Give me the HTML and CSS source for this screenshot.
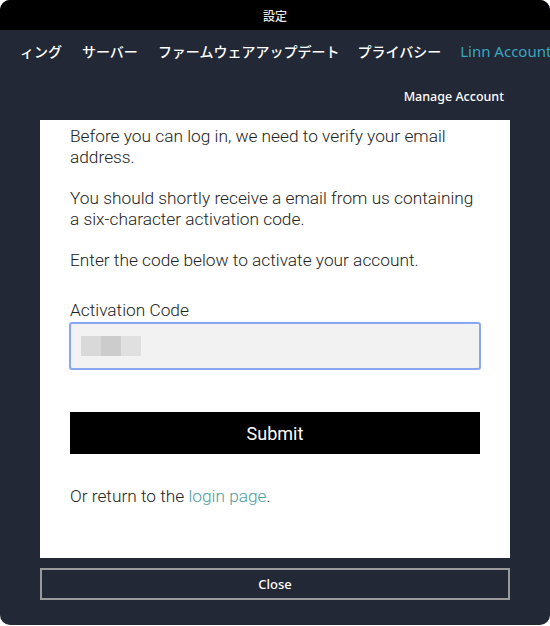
FILE: index.html
```html
<!DOCTYPE html>
<html lang="ja">
<head>
<meta charset="utf-8">
<title>設定</title>
<link rel="stylesheet" href="styles.css">
</head>
<body>
<div class="window">
  <div class="titlebar">設定</div>
  <div class="body">
    <nav class="tabs">
      <span class="tab">ィング</span>
      <span class="tab">サーバー</span>
      <span class="tab">ファームウェアアップデート</span>
      <span class="tab">プライバシー</span>
      <span class="tab active">Linn Account</span>
    </nav>
    <div class="manage">Manage Account</div>
    <div class="card">
      <p>Before you can log in, we need to verify your email address.</p>
      <p>You should shortly receive a email from us containing a six-character activation code.</p>
      <p>Enter the code below to activate your account.</p>
      <label class="label" for="code">Activation Code</label>
      <div class="input" id="code">
        <span class="blur b1"></span><span class="blur b2"></span><span class="blur b3"></span>
      </div>
      <button class="submit">Submit</button>
      <p class="return">Or return to the <a href="#">login page</a>.</p>
    </div>
    <button class="close">Close</button>
  </div>
</div>
</body>
</html>
```
FILE: styles.css
```css
* { box-sizing: border-box; }
html, body { margin: 0; padding: 0; background: #ffffff; }
body { width: 550px; height: 626px; overflow: hidden; font-family: "Noto Sans CJK JP", "Noto Sans", sans-serif; }
.window {
  width: 550px; height: 625px;
  border-radius: 10px;
  overflow: hidden;
  background: #222836;
  display: flex; flex-direction: column;
}
.titlebar {
  height: 30px; background: #000; color: #e8e8e8;
  font-size: 12px; font-weight: 500;
  display: flex; align-items: center; justify-content: center;
}
.body { flex: 1; display: flex; flex-direction: column; align-items: center; }
.tabs {
  align-self: stretch;
  display: flex; gap: 20px;
  padding: 11px 0 0 20px;
  height: 44px;
  white-space: nowrap; overflow: hidden;
  font-size: 14px; color: #ffffff;
  font-family: "Noto Sans CJK JP", sans-serif; font-weight: 500;
  line-height: 20px;
}
.tab { flex: none; }
.tab:nth-child(3) { margin-right: -2px; }
.tab:nth-child(4) { margin-right: -1px; }
.tab.active { color: #3aa6c0; font-family: "Noto Sans", "Liberation Sans", sans-serif; font-weight: 400; font-size: 15px; }
.manage {
  align-self: flex-end;
  margin: 0 46px 0 0;
  height: 46px; padding-top: 14px;
  font-family: "Noto Sans", "Liberation Sans", sans-serif; font-weight: 500;
  font-size: 12.5px; color: #fff;
}
.card {
  width: 470px; height: 438px;
  background: #fff;
  padding: 6px 30px 0 30px;
  font-family: Roboto, "Liberation Sans", sans-serif; font-weight: 300;
  font-size: 17.3px; line-height: 21px; color: #222;
}
.card p { margin: 0 0 20px; }
.label { display: block; margin-top: 29px; }
.input {
  margin: 1px -1px 0; height: 48px;
  background: #f2f2f2;
  border: 2px solid #88a6f2; border-radius: 3px;
  display: flex; align-items: center; padding-left: 10px;
}
.blur { display: block; width: 20px; height: 20px; }
.b1 { background: #d9d9d9; }
.b2 { background: #cccccc; }
.b3 { background: #e0e0e0; }
.submit {
  display: block; width: 410px; height: 42px;
  margin-top: 42px;
  background: #000; color: #fff; border: 0;
  font-family: Roboto, "Liberation Sans", sans-serif; font-weight: 400; font-size: 18px;
}
.return { margin-top: 32px !important; }
.return a { color: #4d9c9c; text-decoration: none; }
.close {
  width: 470px; height: 32px; margin-top: 10px;
  background: transparent; border: 2px solid #9a9a9a; color: #fff;
  font-family: "Noto Sans", "Liberation Sans", sans-serif; font-weight: 500; font-size: 13px;
}
```
